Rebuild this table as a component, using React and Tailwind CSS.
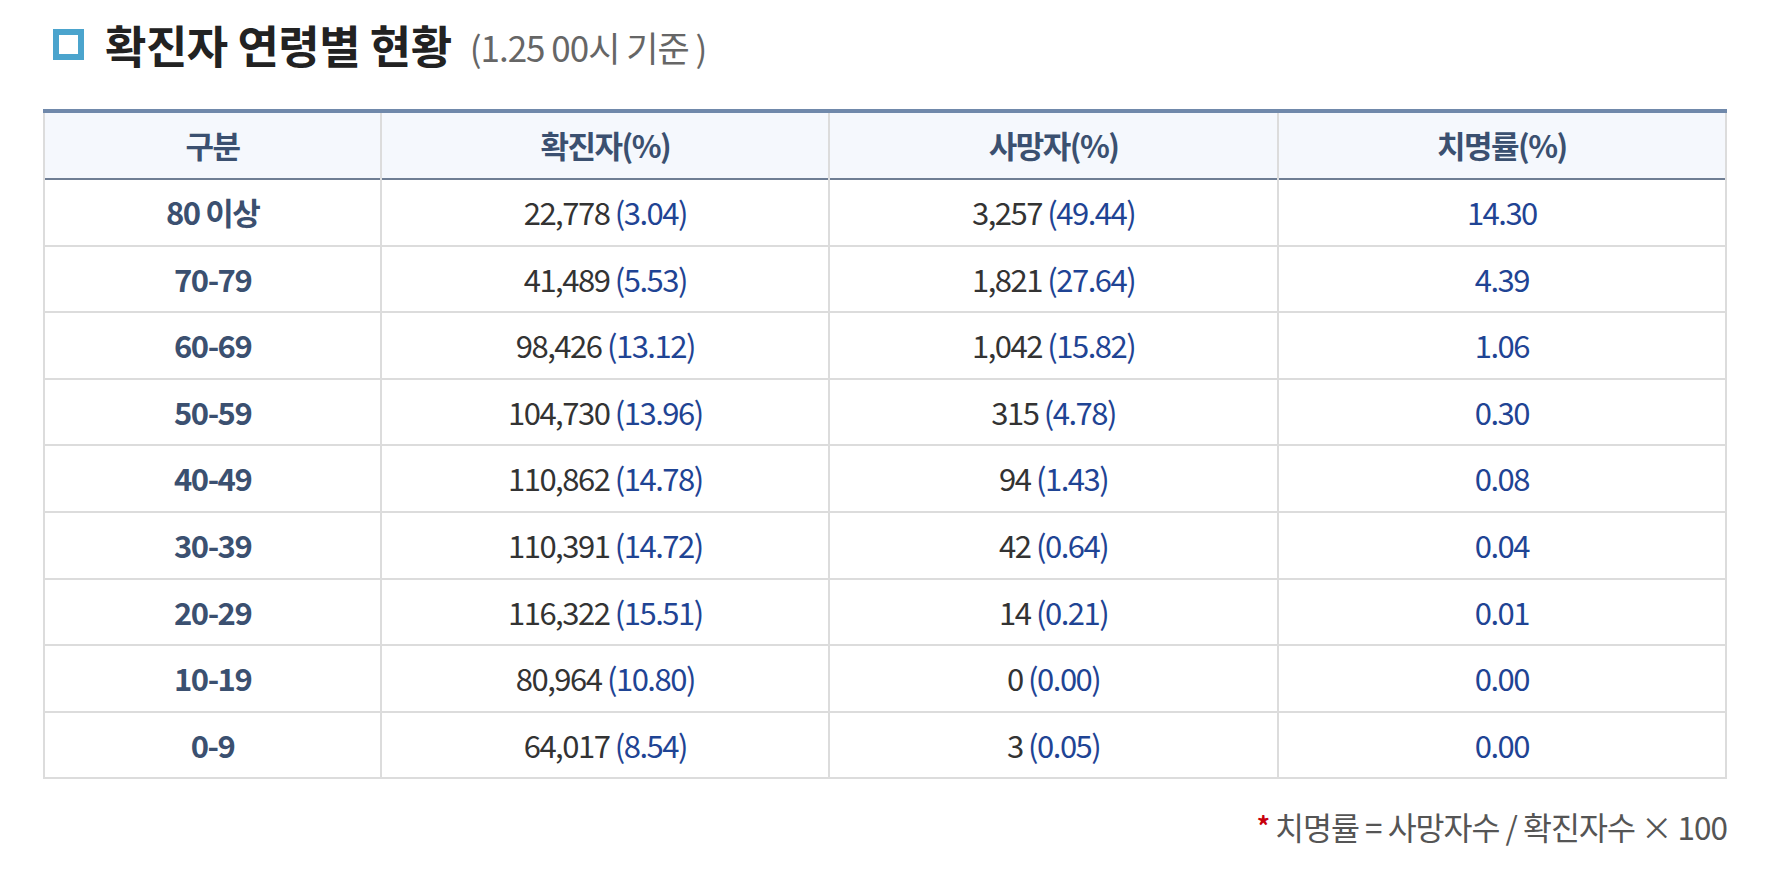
import React from 'react';

const rows = [
  { age: '80 이상', cases: '22,778', casesPct: '3.04', deaths: '3,257', deathsPct: '49.44', rate: '14.30' },
  { age: '70-79', cases: '41,489', casesPct: '5.53', deaths: '1,821', deathsPct: '27.64', rate: '4.39' },
  { age: '60-69', cases: '98,426', casesPct: '13.12', deaths: '1,042', deathsPct: '15.82', rate: '1.06' },
  { age: '50-59', cases: '104,730', casesPct: '13.96', deaths: '315', deathsPct: '4.78', rate: '0.30' },
  { age: '40-49', cases: '110,862', casesPct: '14.78', deaths: '94', deathsPct: '1.43', rate: '0.08' },
  { age: '30-39', cases: '110,391', casesPct: '14.72', deaths: '42', deathsPct: '0.64', rate: '0.04' },
  { age: '20-29', cases: '116,322', casesPct: '15.51', deaths: '14', deathsPct: '0.21', rate: '0.01' },
  { age: '10-19', cases: '80,964', casesPct: '10.80', deaths: '0', deathsPct: '0.00', rate: '0.00' },
  { age: '0-9', cases: '64,017', casesPct: '8.54', deaths: '3', deathsPct: '0.05', rate: '0.00' },
];

const font = { fontFamily: '"Noto Sans CJK KR", "Noto Sans", sans-serif' };

const App = () => {
  return (
    <div className="min-h-screen bg-white pl-[43px] pr-[40px] pt-[22px]" style={font}>
      {/* Title */}
      <div className="flex items-center h-[44px]">
        <span className="shrink-0 w-[31px] h-[31px] border-[6px] border-[#4ba4cd] bg-white ml-[10px] mr-[21px]" />
        <h1 className="text-[45px] font-bold text-[#222] tracking-[-0.5px] leading-none">확진자 연령별 현황</h1>
        <span className="text-[35px] text-[#666] tracking-[-1px] ml-[18px] mt-[4px] leading-none">(1.25 00시 기준 )</span>
      </div>

      {/* Table */}
      <table className="w-full mt-[43px] border-collapse table-fixed border-t-[4px] border-t-[#7089ab]">
        <colgroup>
          <col className="w-[20.05%]" />
          <col className="w-[26.65%]" />
          <col className="w-[26.65%]" />
          <col className="w-[26.65%]" />
        </colgroup>
        <thead>
          <tr className="h-[68px] bg-[#f5f8fd] border-b-2 border-b-[#6f7e94]">
            {['구분', '확진자(%)', '사망자(%)', '치명률(%)'].map((h) => (
              <th key={h} className="border-x-2 border-x-[#dcdcdc] text-[31px] font-bold text-[#3b5070] tracking-[-1.5px]">
                {h}
              </th>
            ))}
          </tr>
        </thead>
        <tbody>
          {rows.map((r) => (
            <tr key={r.age} className="h-[66.6px] border-b-2 border-b-[#dcdcdc] text-[31px] tracking-[-1.5px]">
              <td className="border-x-2 border-x-[#dcdcdc] text-center font-bold text-[#3b5070]">{r.age}</td>
              <td className="border-x-2 border-x-[#dcdcdc] text-center text-[#333]">
                {r.cases} <span className="text-[#1f4494]">({r.casesPct})</span>
              </td>
              <td className="border-x-2 border-x-[#dcdcdc] text-center text-[#333]">
                {r.deaths} <span className="text-[#1f4494]">({r.deathsPct})</span>
              </td>
              <td className="border-x-2 border-x-[#dcdcdc] text-center text-[#1f4494]">{r.rate}</td>
            </tr>
          ))}
        </tbody>
      </table>

      {/* Footnote */}
      <p className="text-right mt-[24px] text-[31.5px] text-[#555] tracking-[-1px]">
        <span className="text-[#c8000c] font-bold text-[26px] leading-none align-[4px]">*</span> 치명률 = 사망자수 / 확진자수 × 100
      </p>
    </div>
  );
};

export default App;
